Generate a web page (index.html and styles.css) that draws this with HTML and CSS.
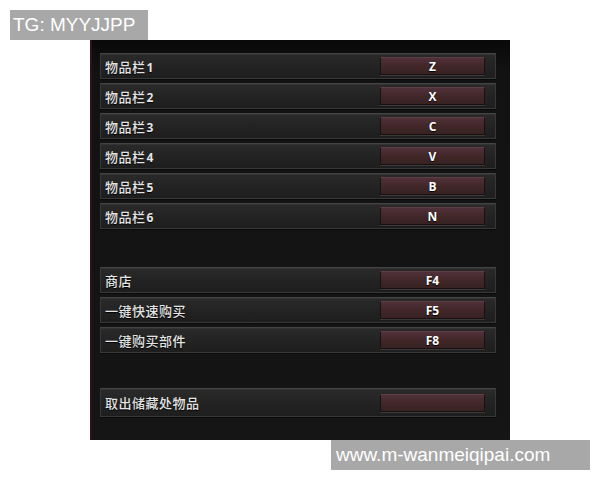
FILE: index.html
```html
<!DOCTYPE html>
<html lang="zh-CN">
<head>
<meta charset="UTF-8">
<title>快捷键设置</title>
<link rel="stylesheet" href="styles.css">
</head>
<body>

<div class="tag tag-top">TG: MYYJJPP</div>

<div class="panel">
    <!-- 物品栏 -->
    <div class="group">
        <div class="row"><span class="label">物品栏<b>1</b></span><span class="key">Z</span></div>
        <div class="row"><span class="label">物品栏<b>2</b></span><span class="key">X</span></div>
        <div class="row"><span class="label">物品栏<b>3</b></span><span class="key">C</span></div>
        <div class="row"><span class="label">物品栏<b>4</b></span><span class="key">V</span></div>
        <div class="row"><span class="label">物品栏<b>5</b></span><span class="key">B</span></div>
        <div class="row"><span class="label">物品栏<b>6</b></span><span class="key">N</span></div>
    </div>

    <!-- 商店 -->
    <div class="group">
        <div class="row"><span class="label">商店</span><span class="key">F4</span></div>
        <div class="row"><span class="label">一键快速购买</span><span class="key">F5</span></div>
        <div class="row"><span class="label">一键购买部件</span><span class="key">F8</span></div>
    </div>

    <div class="group">
        <div class="row row-tall"><span class="label">取出储藏处物品</span><span class="key"></span></div>
    </div>
</div>

<div class="tag tag-bottom">www.m-wanmeiqipai.com</div>

</body>
</html>
```

FILE: styles.css
```css
* {
    margin: 0;
    padding: 0;
    box-sizing: border-box;
}

body {
    background: #fff;
    font-family: "Noto Sans CJK SC", "Noto Sans", sans-serif;
    position: relative;
    width: 600px;
    height: 480px;
}

/* Watermark labels */
.tag {
    position: absolute;
    background: #a8a8a8;
    color: #fff;
    font-family: "Liberation Sans", Arial, sans-serif;
    font-size: 19px;
    line-height: 30px;
    height: 30px;
    white-space: nowrap;
}

.tag-top {
    left: 10px;
    top: 10px;
    width: 138px;
    padding-left: 3px;
}

.tag-bottom {
    left: 331px;
    top: 440px;
    width: 259px;
    padding-left: 5px;
}

/* Settings panel */
.panel {
    position: absolute;
    left: 90px;
    top: 40px;
    width: 420px;
    height: 400px;
    background: linear-gradient(180deg, #090909 0px, #121212 30px, #151515 100%);
    border-left: 2px solid #2a1416;
    padding: 13px 14px 0 8px;
    display: flex;
    flex-direction: column;
    gap: 38px;
}

.group {
    display: flex;
    flex-direction: column;
    gap: 4px;
}

.group + .group + .group {
    margin-top: -3px;
}

.row {
    height: 26px;
    display: flex;
    align-items: center;
    justify-content: space-between;
    padding: 0 10px 0 4px;
    background: linear-gradient(180deg, #2a2a2a, #222 60%, #1e1e1e);
    border: 1px solid #383838;
    border-top-color: #444;
    box-shadow: 0 1px 0 #0a0a0a, inset 0 1px 0 rgba(255, 255, 255, 0.05);
}

.row-tall {
    height: 29px;
}

.label {
    color: #e4e4e4;
    font-size: 13px;
    font-weight: 500;
    text-shadow: 0 1px 1px #000;
    letter-spacing: 0.5px;
}

.label b {
    font-family: "Open Sans", "Liberation Sans", sans-serif;
    font-weight: 700;
    font-size: 12px;
    margin-left: 1px;
}

.key {
    width: 105px;
    height: 18px;
    display: flex;
    align-items: center;
    justify-content: center;
    background: linear-gradient(180deg, #50313a, #422729 50%, #372222);
    border: 1px solid #1a1010;
    border-top-color: #5e3e42;
    box-shadow: 0 1px 0 #3a3a3a;
    color: #fff;
    font-family: "Open Sans", "Liberation Sans", sans-serif;
    font-weight: 700;
    font-size: 12px;
    text-shadow: 0 1px 1px #000;
}
```
